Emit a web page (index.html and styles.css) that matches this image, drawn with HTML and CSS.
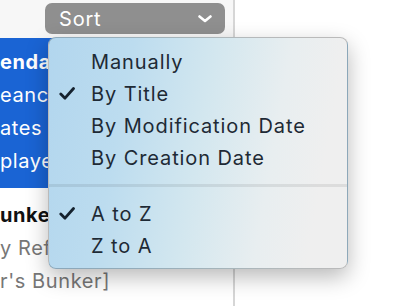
FILE: index.html
```html
<!DOCTYPE html>
<html lang="en">
<head>
  <meta charset="UTF-8" />
  <title>Sort menu</title>
  <link rel="stylesheet" href="styles.css">
</head>
<body>

  <div class="window">
    <!-- note list -->
    <div class="sidebar">
      <div class="toolbar">
        <button class="sort-btn">
          <span>Sort</span>
          <svg width="14" height="8" viewBox="0 0 14 8"><polyline points="1.5,1.5 7,6 12.5,1.5" fill="none" stroke="#fff" stroke-width="2.6" stroke-linecap="round" stroke-linejoin="round"/></svg>
        </button>
      </div>
      <div class="note selected">
        <p class="note-title">endar</p>
        <p>eance</p>
        <p>ates</p>
        <p>player</p>
      </div>
      <div class="note">
        <p class="note-title">unker</p>
        <p>y Ref</p>
        <p>r's Bunker]</p>
      </div>
    </div>
    <div class="editor"></div>
  </div>

  <!-- sort popup -->
  <div class="menu">
    <ul>
      <li>Manually</li>
      <li class="checked"><svg class="check" width="16" height="13" viewBox="0 0 16 13"><polyline points="1.8,7 6,11.2 14.5,1.5" fill="none" stroke="#15222e" stroke-width="2.8" stroke-linecap="round" stroke-linejoin="round"/></svg>By Title</li>
      <li>By Modification Date</li>
      <li>By Creation Date</li>
    </ul>
    <div class="sep"></div>
    <ul>
      <li class="checked"><svg class="check" width="16" height="13" viewBox="0 0 16 13"><polyline points="1.8,7 6,11.2 14.5,1.5" fill="none" stroke="#15222e" stroke-width="2.8" stroke-linecap="round" stroke-linejoin="round"/></svg>A to Z</li>
      <li>Z to A</li>
    </ul>
  </div>

</body>
</html>
```
FILE: styles.css
```css
body {
  margin: 0;
  font-family: 'Inter', 'Noto Sans', sans-serif;
  background: #fff;
  overflow: hidden;
}
.window {
  display: flex;
  height: 306px;
}
.sidebar {
  width: 233px;
  border-right: 2px solid #d6d6d6;
  background: #fff;
  overflow: hidden;
}
.editor {
  flex: 1;
  background: #fff;
}
.toolbar {
  height: 38px;
  box-sizing: border-box;
  padding: 3px 0 0 45px;
  background: #f7f7f7;
}
.sort-btn {
  width: 180px;
  height: 31px;
  border: none;
  border-radius: 7px;
  background: #8f8f8f;
  color: #fff;
  font-family: inherit;
  font-size: 20px;
  letter-spacing: 0.8px;
  display: flex;
  align-items: center;
  justify-content: space-between;
  padding: 0 13px 0 14px;
}
.note {
  padding: 11px 0 8px 0;
  background: #fff;
}
.note p {
  margin: 0;
  font-size: 20px;
  letter-spacing: 0.6px;
  line-height: 33px;
  color: #777;
  white-space: nowrap;
}
.note .note-title {
  font-weight: bold;
  color: #111;
}
.note.selected {
  height: 150px;
  box-sizing: border-box;
  padding: 8px 0 10px 0;
  background: #1a64d4;
}
.note.selected p {
  color: #fff;
}

.menu {
  position: absolute;
  left: 48px;
  top: 37px;
  width: 300px;
  box-sizing: border-box;
  padding: 8px 0 6px 0;
  border-radius: 8px;
  border: 1px solid rgba(0, 0, 0, 0.22);
  background: linear-gradient(100deg, #b2d6ee 0%, #bcdcef 25%, #d3e7ef 50%, #e8eef0 72%, #efefef 88%);
  box-shadow: 0 8px 22px rgba(0, 0, 0, 0.28);
}
.menu ul {
  list-style: none;
  margin: 0;
  padding: 0;
}
.menu li {
  position: relative;
  height: 32px;
  line-height: 32px;
  padding-left: 42px;
  font-size: 20px;
  letter-spacing: 0.9px;
  color: #1e2a35;
}
.menu .check {
  position: absolute;
  left: 10px;
  top: 9px;
}
.sep {
  height: 3px;
  margin: 10px 0 11px 0;
  background: rgba(0, 0, 0, 0.08);
}
```
